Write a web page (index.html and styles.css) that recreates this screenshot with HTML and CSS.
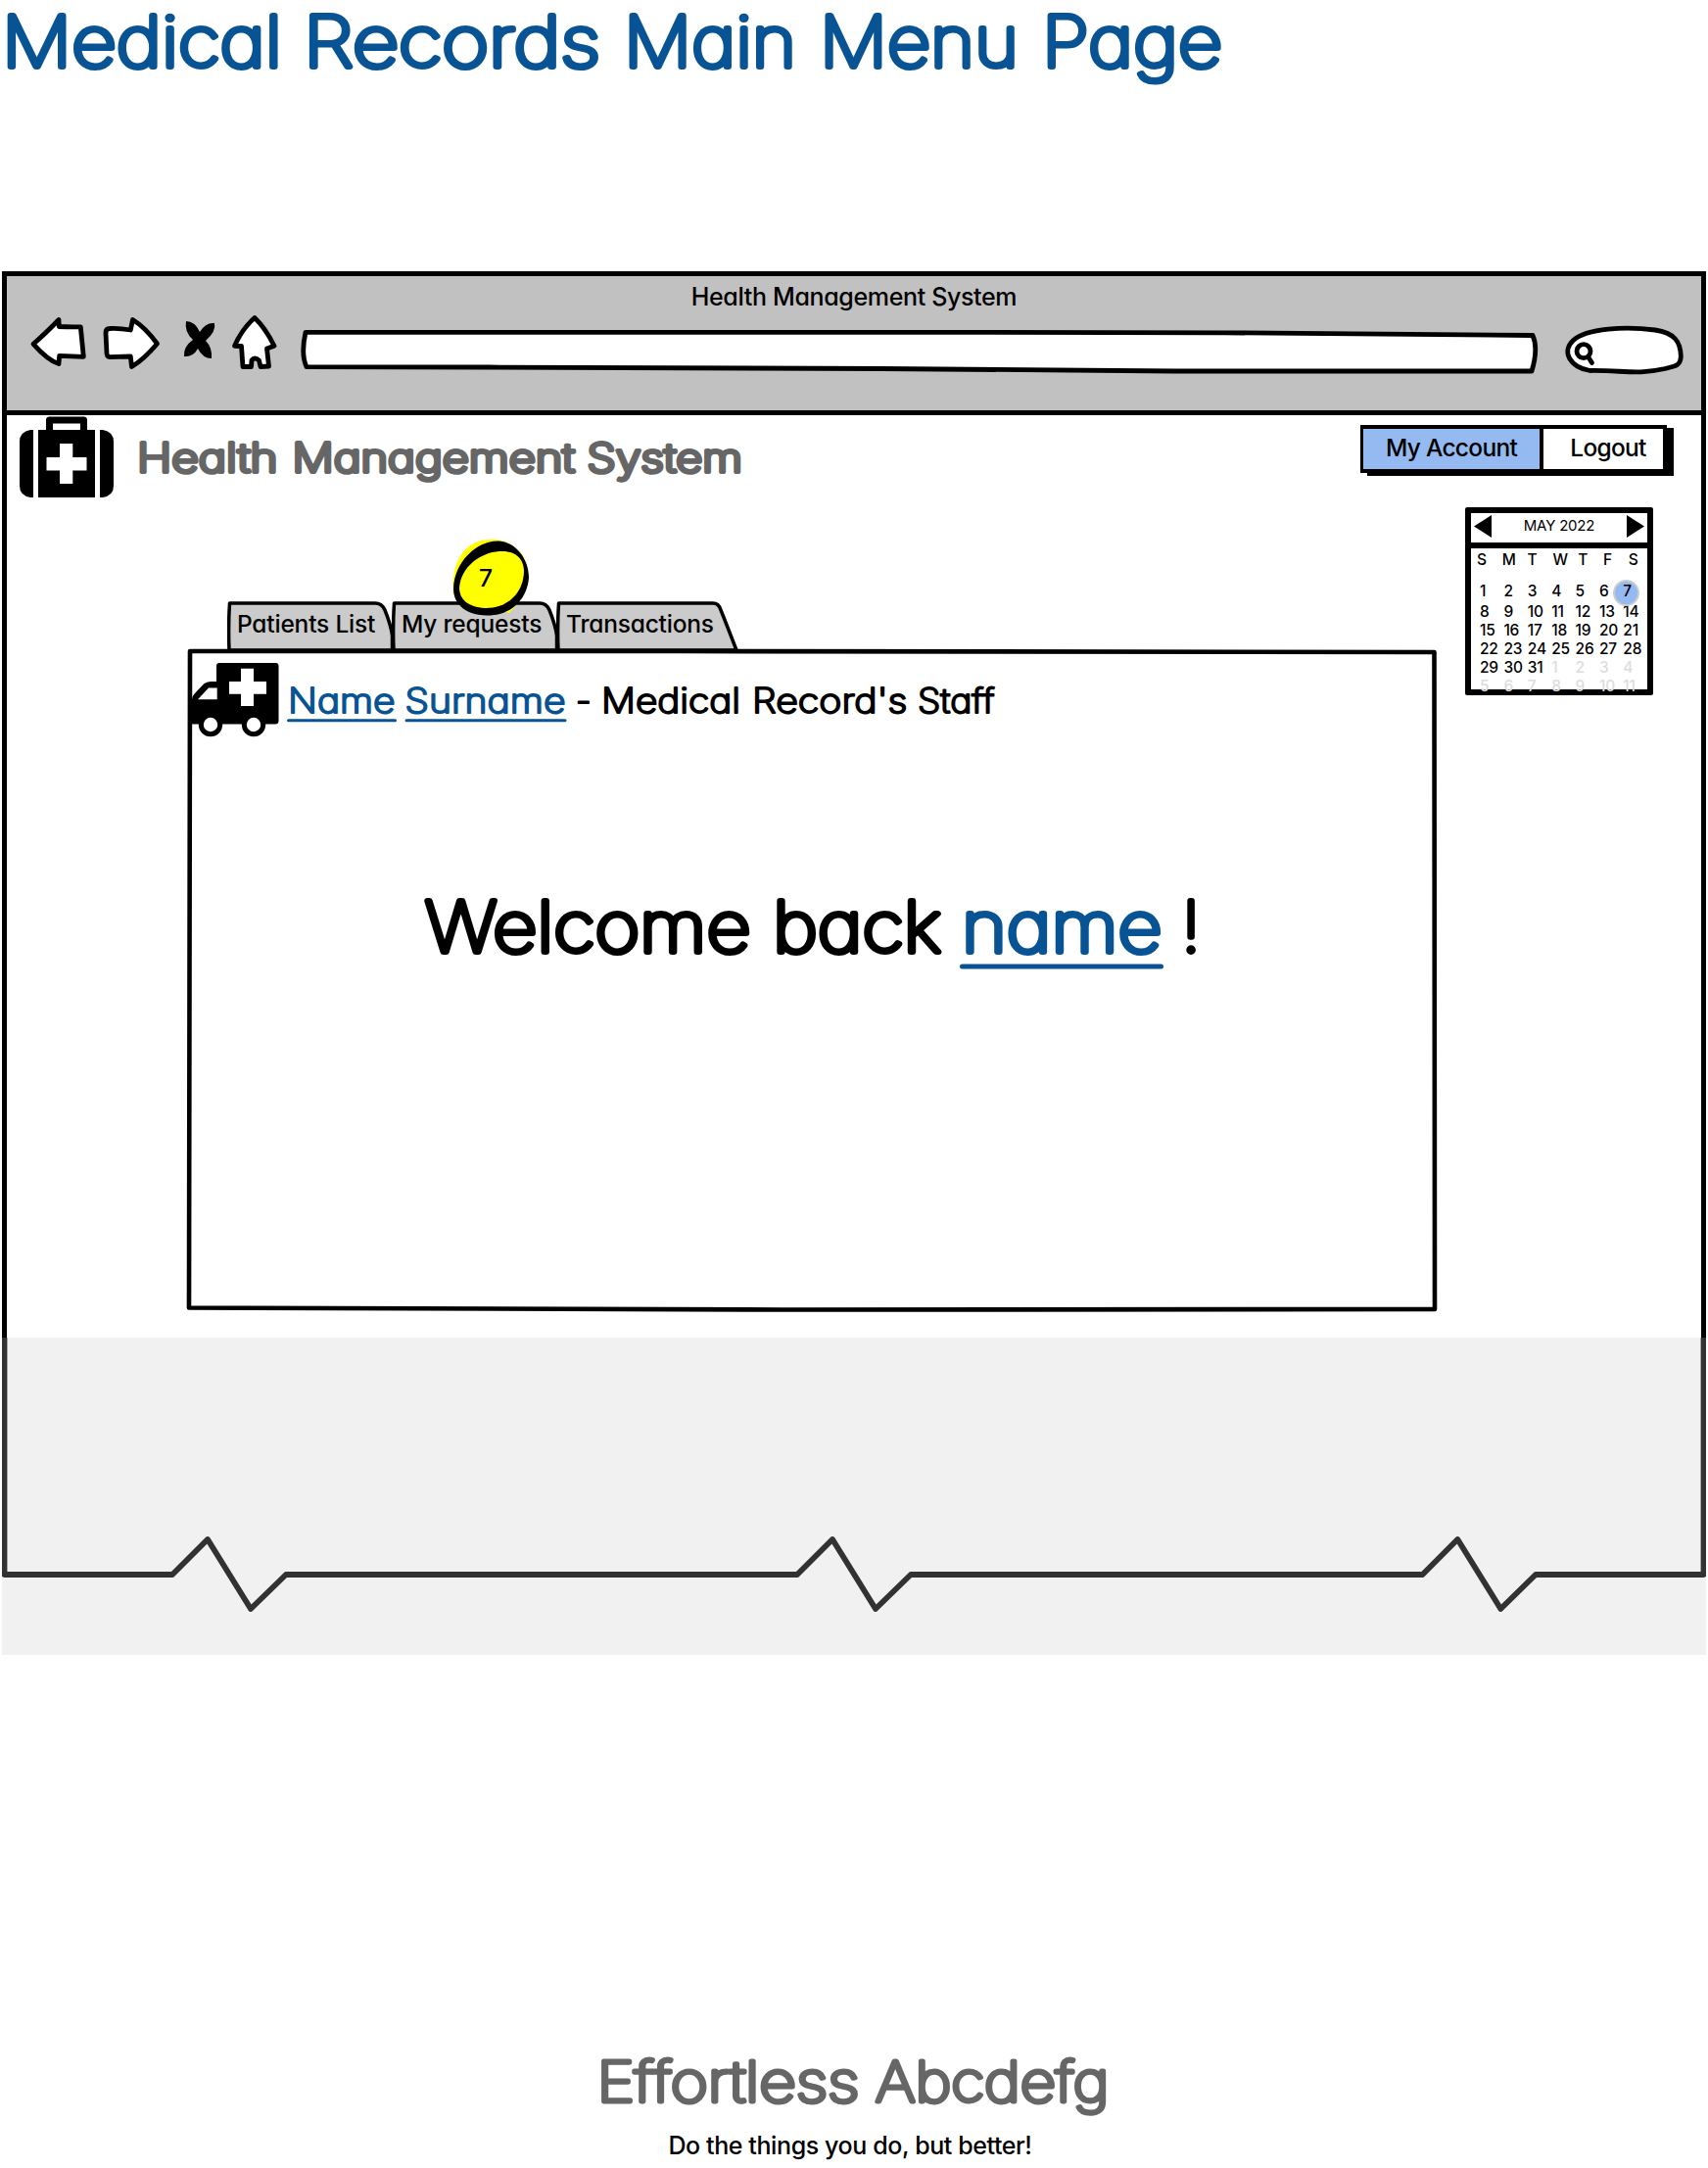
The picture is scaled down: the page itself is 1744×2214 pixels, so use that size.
FILE: index.html
```html
<!DOCTYPE html>
<html lang="en">
<head>
<meta charset="utf-8">
<title>Medical Records Main Menu Page</title>
<link rel="stylesheet" href="styles.css">
</head>
<body>
<h1 class="page-title">
  <svg class="ink title-ink" viewBox="0 0 1260 100" width="1260" height="100">
    <text y="68"><tspan x="2" textLength="286" lengthAdjust="spacingAndGlyphs">Medical</tspan> <tspan x="310" textLength="303" lengthAdjust="spacingAndGlyphs">Records</tspan> <tspan x="637" textLength="176" lengthAdjust="spacingAndGlyphs">Main</tspan> <tspan x="837" textLength="203" lengthAdjust="spacingAndGlyphs">Menu</tspan> <tspan x="1064" textLength="184" lengthAdjust="spacingAndGlyphs">Page</tspan></text>
  </svg>
</h1>

<div class="window">
  <header class="toolbar">
    <div class="window-title"><span>Health Management System</span></div>
    <div class="controls">
      <svg class="sketch" viewBox="7 315 89 70" width="89" height="70"><path d="M34 351.3Q46 341 60 326.500L60.3 333.5Q70 334 82.3 333.8L85.3 364.3L60.7 363.3L60 371.500Q49 368 34 351.3Z"/></svg>
      <svg class="sketch" viewBox="96 315 80 70" width="80" height="70"><path d="M108 340Q108 335.500 112 335.500Q122 335 133.3 337L135.5 326.500Q148 334 160.5 351Q147 367 134.5 374.500L133.3 364L112 364.7Q109.500 364.5 109 361Z"/></svg>
      <svg viewBox="176 315 54 70" width="54" height="70"><path d="M190 328Q199 328 204 339Q210 329 219 330Q221 338 210 348Q217 355 216 366Q207 366 202 356Q197 365 188 364Q187 354 197 347Q188 339 190 328Z"/></svg>
      <svg class="sketch" viewBox="230 315 66 70" width="66" height="70"><path d="M260 324.5Q271 335 280 353.2L272.5 356L274.5 374L266 374.5L264.5 368Q260 364 257 368L256.5 374.5L248 374.5L246.5 353.5L239.5 353.3Q247 336 260 324.5Z"/></svg>
      <svg class="sketch" viewBox="296 315 1288 70" width="1288" height="70"><path d="M312 339.3L900 339.3L1250 339.8L1565 342.5Q1571 356 1564 379L1200 379L900 376.5L500 375L313 374.7Q307 362 312 339.3Z"/></svg>
      <svg class="sketch" viewBox="1584 315 153 70" width="153" height="70"><path d="M1623.5 378.5C1603 375 1594 359 1606.5 347.5C1620 335 1660 333 1690 337C1710 340 1716 349 1716.3 364C1716 375 1708 374 1700 376.5C1672 383 1657 378 1623.5 378.5Z"/><circle cx="1617" cy="358.7" r="7"/><path d="M1622 365L1625.5 370.5"/></svg>
    </div>
  </header>

  <div class="app-head">
    <svg viewBox="7 424 123 86" width="123" height="86"><path d="M34 439V508H31Q20 506 20 496V451Q20 441 31 439ZM39 439H97V508H39ZM102 439H105Q116 441 116 451V496Q116 506 105 508H102Z"/><path d="M50.5 440V429H85.500V440" class="handle"/><path d="M61 453H74.300V467H88.500V480.500H74.300V494H61V480.500H47.500V467H61Z" fill="#fff"/></svg>
    <svg class="ink brand-ink" viewBox="130 424 680 86" width="680" height="86"><text y="481.700"><tspan x="140" textLength="143.500" lengthAdjust="spacingAndGlyphs">Health</tspan> <tspan x="298.500" textLength="288.500" lengthAdjust="spacingAndGlyphs">Management</tspan> <tspan x="599.500" textLength="158.500" lengthAdjust="spacingAndGlyphs">System</tspan></text></svg>
    <nav class="account">
      <button class="account-btn active">My Account</button>
      <button class="account-btn">Logout</button>
    </nav>
  </div>

  <div class="body">
    <main class="workspace">
      <nav class="tabs">
        <div class="tab"><svg viewBox="0 0 170 51"><path d="M2 51Q1 25 2.500 3H151Q158 3 161 10Q167 25 168.500 36V51Z"/></svg><span>Patients List</span></div>
        <div class="tab"><svg viewBox="0 0 170 51"><path d="M2 51Q1 25 2.500 3H151Q158 3 161 10Q167 25 168.500 36V51Z"/></svg><span>My requests</span>
          <div class="badge">
            <svg viewBox="458 546 88 86"><path d="M501 550C475 550 460 572 463 606L520 625C540 605 545 575 530 562Q518 549 501 550Z" class="yellow"/><path d="M510 551.500C527 553 540 570 540 589C538 613 520 628 497 627.500C473 627 463 614 463 600C464 572 488 550 510 551.500Z"/><path d="M513 562C528 562 535 571 535 583C534 606 517 620.500 495 620C478 619 469 611 469 599C471 577 492 562 513 562Z" class="yellow"/></svg>
            <span>7</span>
          </div>
        </div>
        <div class="tab last"><svg viewBox="0 0 187 51"><path d="M2 51Q1 25 2.500 3H160Q166 3 168 10Q174 25 184 51Z"/></svg><span>Transactions</span></div>
      </nav>
      <section class="panel">
        <svg class="frame" viewBox="190 661 1280 680"><path d="M194 665L700 665L1464.500 666Q1464 900 1465 1337L800 1337.500L193 1335.500Q193 1000 194 665Z"/></svg>
        <div class="person">
          <svg viewBox="196 672 94 86" width="94" height="86"><path d="M221 739.500H196V714Q196 711 199 708L208 698.500Q211 696 215 696H221V680Q221 677 224 677H281.500Q284.500 677 284.500 680V736Q284.500 739.500 281 739.500Z"/><g fill="#fff"><path d="M202 714.300L213 702.500H221.700V714.300ZM246 682.700H259V696H272V708.700H259V721H246V708.700H234V696H246Z"/></g><g class="wheels"><circle cx="215" cy="740" r="9.700"/><circle cx="259" cy="740" r="9.700"/></g></svg>
          <svg class="ink name-ink" viewBox="290 672 740 86" width="740" height="86"><a class="link"><text x="294" y="728" textLength="109.500" lengthAdjust="spacingAndGlyphs">Name</text><path d="M294.500 735.700H403.500"/></a><a class="link"><text x="413.500" y="728" textLength="164" lengthAdjust="spacingAndGlyphs">Surname</text><path d="M415 735.700H577"/></a><text y="728"><tspan x="588">-</tspan> <tspan x="614" textLength="142" lengthAdjust="spacingAndGlyphs">Medical</tspan> <tspan x="768" textLength="158.500" lengthAdjust="spacingAndGlyphs">Record's</tspan> <tspan x="937" textLength="78.500" lengthAdjust="spacingAndGlyphs">Staff</tspan></text></svg>
        </div>
        <svg class="ink welcome-ink" viewBox="420 890 820 120" width="820" height="120"><text y="972"><tspan x="434" textLength="332.500" lengthAdjust="spacingAndGlyphs">Welcome</tspan> <tspan x="789" textLength="172" lengthAdjust="spacingAndGlyphs">back</tspan></text><a class="link"><text x="982" y="972" textLength="204.500" lengthAdjust="spacingAndGlyphs">name</text><path d="M982.500 987H1185.500"/></a><text x="1206.500" y="972">!</text></svg>
      </section>
    </main>
    <aside class="calendar">
      <div class="cal-head"><svg viewBox="0 0 18 23"><path d="M0 11.500L18 0V23Z"/></svg><span>MAY 2022</span><svg viewBox="0 0 18 23"><path d="M18 11.500L0 0V23Z"/></svg></div>
      <div class="week"><span>S</span><span>M</span><span>T</span><span>W</span><span>T</span><span>F</span><span>S</span></div>
      <div class="days"><span>1</span><span>2</span><span>3</span><span>4</span><span>5</span><span>6</span><span class="today">7</span></div>
      <div class="days"><span>8</span><span>9</span><span>10</span><span>11</span><span>12</span><span>13</span><span>14</span></div>
      <div class="days"><span>15</span><span>16</span><span>17</span><span>18</span><span>19</span><span>20</span><span>21</span></div>
      <div class="days"><span>22</span><span>23</span><span>24</span><span>25</span><span>26</span><span>27</span><span>28</span></div>
      <div class="days"><span>29</span><span>30</span><span>31</span><span class="next">1</span><span class="next">2</span><span class="next">3</span><span class="next">4</span></div>
      <div class="days"><span class="next">5</span><span class="next">6</span><span class="next">7</span><span class="next">8</span><span class="next">9</span><span class="next">10</span><span class="next">11</span></div>
    </aside>
  </div>
  <div class="fold">
    <svg viewBox="2 1366 1740 324"><path d="M4.500 1366V1608H176L212 1572L256 1643L292 1608H814L850 1572L894 1643L930 1608H1452.500L1488.300 1572L1532.300 1643L1568 1608H1739.500V1366"/></svg>
  </div>
</div>

<footer class="footer">
  <svg class="ink foot-ink" viewBox="600 2090 544 76" width="544" height="76"><text y="2145.500"><tspan x="609.500" textLength="268" lengthAdjust="spacingAndGlyphs">Effortless</tspan> <tspan x="894" textLength="238.500" lengthAdjust="spacingAndGlyphs">Abcdefg</tspan></text></svg>
  <p><span class="tagline">Do the things you do, but better!</span></p>
</footer>
</body>
</html>
```
FILE: styles.css
```css
* { box-sizing: border-box; }
body {
  margin: 0;
  width: 1744px;
  height: 2214px;
  overflow: hidden;
  background: #fff;
  color: #000;
  font-family: Inter, "Open Sans", sans-serif;
  font-feature-settings: "cv11" 1;
  font-weight: 450;
}
svg { display: block; flex: none; }
.page-title { margin: 0; height: 277px; }

/* Thin letters with a round outline give the felt-pen look */
.ink { fill: currentColor; stroke: currentColor; stroke-linejoin: round; stroke-linecap: round; font-weight: 100; overflow: visible; }
.title-ink { color: #085394; font-size: 71.500px; stroke-width: 6px; }
.brand-ink { color: #666; font-size: 40.500px; font-weight: 250; stroke-width: 4.200px; }
.name-ink { font-size: 35px; font-weight: 200; stroke-width: 2.100px; }
.welcome-ink { font-size: 71px; stroke-width: 6px; margin: 132px 0 0 224px; }
.foot-ink { color: #666; font-size: 56.500px; stroke-width: 4.900px; }
.link { color: #085394; fill: #085394; stroke: #085394; }
.name-ink path { stroke-width: 3px; }
.welcome-ink path { stroke-width: 5px; }

.window { width: 1740px; height: 1413px; margin-left: 2px; border: solid #000; border-width: 5px 5px 0; position: relative; }
.toolbar { height: 142px; background: #c1c1c1; border-bottom: 5px solid #000; }
.window-title { height: 33px; line-height: 43px; text-align: center; font-size: 25px; letter-spacing: -.35px; }
.controls { display: flex; }
.sketch { fill: #fff; stroke: #000; stroke-width: 4.800px; stroke-linejoin: round; stroke-linecap: round; }

.app-head { display: flex; height: 86px; }
.handle { fill: none; stroke: #000; stroke-width: 7px; stroke-linejoin: round; }
.account { display: flex; width: 313px; height: 49px; margin: 10px 35px 0 auto; border: 4px solid #000; border-left-width: 3px; box-shadow: 7px 3px 0 #000; }
.account-btn { font: inherit; font-feature-settings: inherit; font-size: 24.500px; letter-spacing: -.7px; border: 0; background: #fff; width: 122px; line-height: 36px; height: 41px; padding: 0 0 3px 10px; color: #000; }
.account-btn.active { background: #94baf1; width: 184px; border-right: 4px solid #000; padding-left: 0; }

.body { display: flex; height: 856px; }
.workspace { width: 1489px; padding: 102px 0 0 183px; }
.tabs { display: flex; height: 49px; padding-left: 42px; }
.tab { position: relative; width: 168px; height: 51px; padding-left: 10px; line-height: 51px; font-size: 24.500px; letter-spacing: -.2px; white-space: nowrap; }
.tab > svg { position: absolute; left: 0; top: 1px; width: 170px; height: 51px; fill: #cbcbcb; stroke: #000; stroke-width: 3.500px; stroke-linejoin: round; }
.tab.last > svg { width: 187px; }
.tab > span { position: relative; }
.badge { position: absolute; left: 58px; top: -65px; width: 88px; height: 86px; line-height: 86px; }
.badge svg { position: absolute; inset: 0; }
.badge span { position: absolute; left: 31px; top: 0; }
.yellow { fill: #ff0; }
.panel { position: relative; width: 1280px; height: 680px; padding: 11px 0 0 6px; }
.frame { position: absolute; inset: 0; width: 1280px; height: 680px; fill: none; stroke: #000; stroke-width: 4.600px; stroke-linejoin: round; }
.person { display: flex; height: 86px; }
.wheels { fill: #fff; stroke: #000; stroke-width: 5px; }

.calendar { width: 192px; height: 192px; margin-top: 8px; border: 6px solid #000; border-radius: 2px; font-size: 15.500px; font-weight: 450; line-height: 19px; }
.cal-head { height: 36px; border-bottom: 6px solid #000; display: flex; align-items: center; justify-content: space-between; padding: 0 3px 4px; line-height: 24px; font-size: 15px; }
.cal-head svg { width: 18px; height: 23px; }
.cal-head span { font-weight: 400; letter-spacing: -.2px; }
.week, .days { display: grid; padding-left: 9px; grid-template-columns: repeat(7, 24.400px); letter-spacing: -.2px; }
.week { grid-template-columns: repeat(7, 25.800px); padding-left: 6px; height: 33px; line-height: 23px; }
.days { height: 19px; }
.days:nth-child(3) { height: 22px; line-height: 22px; }
.today { position: relative; z-index: 0; }
.today::before { content: ""; position: absolute; z-index: -1; left: -10px; top: -1px; width: 23px; height: 23px; border: 2px solid #ccc; border-radius: 50%; background: #94baf1; }
.next { color: #ddd; }

.fold { position: absolute; left: -5px; top: 1084px; width: 1740px; height: 324px; }
.fold::after { content: ""; position: absolute; inset: 0; background: rgba(201, 201, 201, .25); }
.fold svg { width: 1740px; height: 324px; background: #fff; fill: none; stroke: #000; stroke-width: 5.800px; stroke-linejoin: round; }

.footer { padding-top: 400px; display: flex; flex-direction: column; align-items: center; }
.footer p { margin: 6px 0 0; height: 38px; line-height: 38px; font-size: 25px; letter-spacing: -.4px; }
.tagline { position: relative; left: -4px; }
```
